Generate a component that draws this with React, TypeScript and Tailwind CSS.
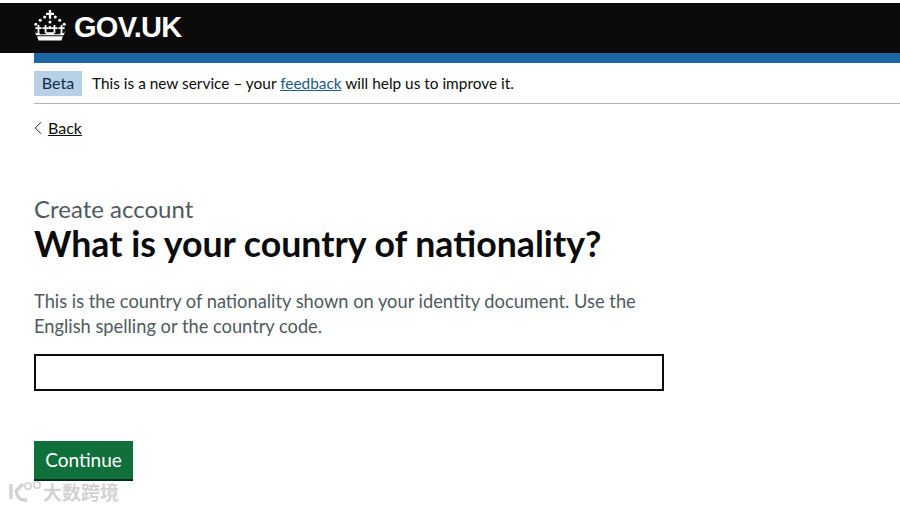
import { ChevronLeft } from 'lucide-react'

function Crown() {
  const dots = [
    [3, 16], [8, 11.5], [13, 8], [25, 8], [30, 11.5], [35, 16], [19, 13.5],
  ]
  const crosses = [6, 14, 24, 32]
  return (
    <svg width="34" height="31" viewBox="0 0 38 35" fill="#fff" className="flex-shrink-0 -ml-[1px]">
      <path d="M17.7 0h2.6v3h3.2v2.6h-3.2V10h-2.6V5.600h-3.200V3h3.200z" />
      {dots.map(([cx, cy]) => (
        <circle key={`${cx}-${cy}`} cx={cx} cy={cy} r="1.7" />
      ))}
      {crosses.map((x) => (
        <path key={x} d={`M${x - 1} 17h2v2.500h2.500v2h-2.500V26h-2v-4.500h-2.500v-2h2.500z`} />
      ))}
      <circle cx="19" cy="20" r="1.8" />
      <path d="M1 22l2.500 6.500h31L37 22l-2 4h-4l-1 1.500h-6L23 25h-8l-1 2.500H8L7 26H3z" />
      <path d="M4.500 29.500h29L32 34.500H6z" />
    </svg>
  )
}

export default function App() {
  return (
    <div className="min-h-[509px] bg-white pt-[3px] font-['Lato','Noto_Sans',sans-serif] overflow-hidden relative">
      {/* Header */}
      <header className="h-[50px] bg-[#0b0b0b] flex items-start pl-[34px] pt-[7px] gap-[7px]">
        <Crown />
        <span className="text-[29px] leading-[34px] tracking-[-0.7px] font-bold text-white font-['Liberation_Sans',sans-serif]">GOV.UK</span>
      </header>

      <div className="pl-[34px]">
        <div className="h-[10px] bg-[#1d66a6]" />

        {/* Phase banner */}
        <div className="flex items-start h-[41px] pt-[8px] border-b border-[#b1b4b6]">
          <span className="w-[48px] h-[25px] bg-[#b8d0e6] text-[#0c2d4a] text-[16px] leading-[23px] text-center">Beta</span>
          <p className="ml-[10px] text-[15.4px] leading-[24px] text-[#0b0c0c]">
            This is a new service – your{' '}
            <a className="text-[#1d5a8a] underline">feedback</a> will help us to improve it.
          </p>
        </div>

        {/* Back link */}
        <a className="flex items-center mt-[13px] h-[22px] text-[16px] text-[#0b0c0c]">
          <ChevronLeft className="w-[22px] h-[22px] -ml-[7px]" strokeWidth={1} />
          <span className="-ml-[1px] underline">Back</span>
        </a>

        {/* Form */}
        <main className="mt-[55px]">
          <div className="text-[24px] leading-[30px] text-[#505a5f]">Create account</div>
          <h1 className="text-[35.7px] leading-[40px] font-bold text-[#0b0c0c]">What is your country of nationality?</h1>
          <p className="mt-[25px] w-[630px] text-[18.27px] leading-[25px] text-[#505a5f]">
            This is the country of nationality shown on your identity document. Use the English spelling or the country code.
          </p>
          <input className="block mt-[15px] w-[630px] h-[37px] border-2 border-[#0b0c0c] bg-white outline-none" />
          <button className="block mt-[50px] h-[40px] w-[99px] bg-[#10703c] text-white text-[19px] leading-[38px] border-b-2 border-[#002d18]">
            Continue
          </button>
        </main>
      </div>

      {/* Watermark */}
      <div className="absolute left-[8px] top-[480px] flex items-center text-[#d2d2d2]">
        <svg width="35" height="24" viewBox="0 0 35 24" fill="none" stroke="#d2d2d2" strokeWidth="3.5" className="flex-shrink-0">
          <path d="M3 4v15M15 4L8 11c1 6 5 10 11 9" />
          <circle cx="20" cy="6" r="3.200" strokeWidth="1.600" />
          <circle cx="29" cy="5" r="3.200" strokeWidth="1.600" />
        </svg>
        <span className="text-[19px] leading-[24px] font-bold font-['Noto_Sans_CJK_SC',sans-serif]">大数跨境</span>
      </div>
    </div>
  )
}
